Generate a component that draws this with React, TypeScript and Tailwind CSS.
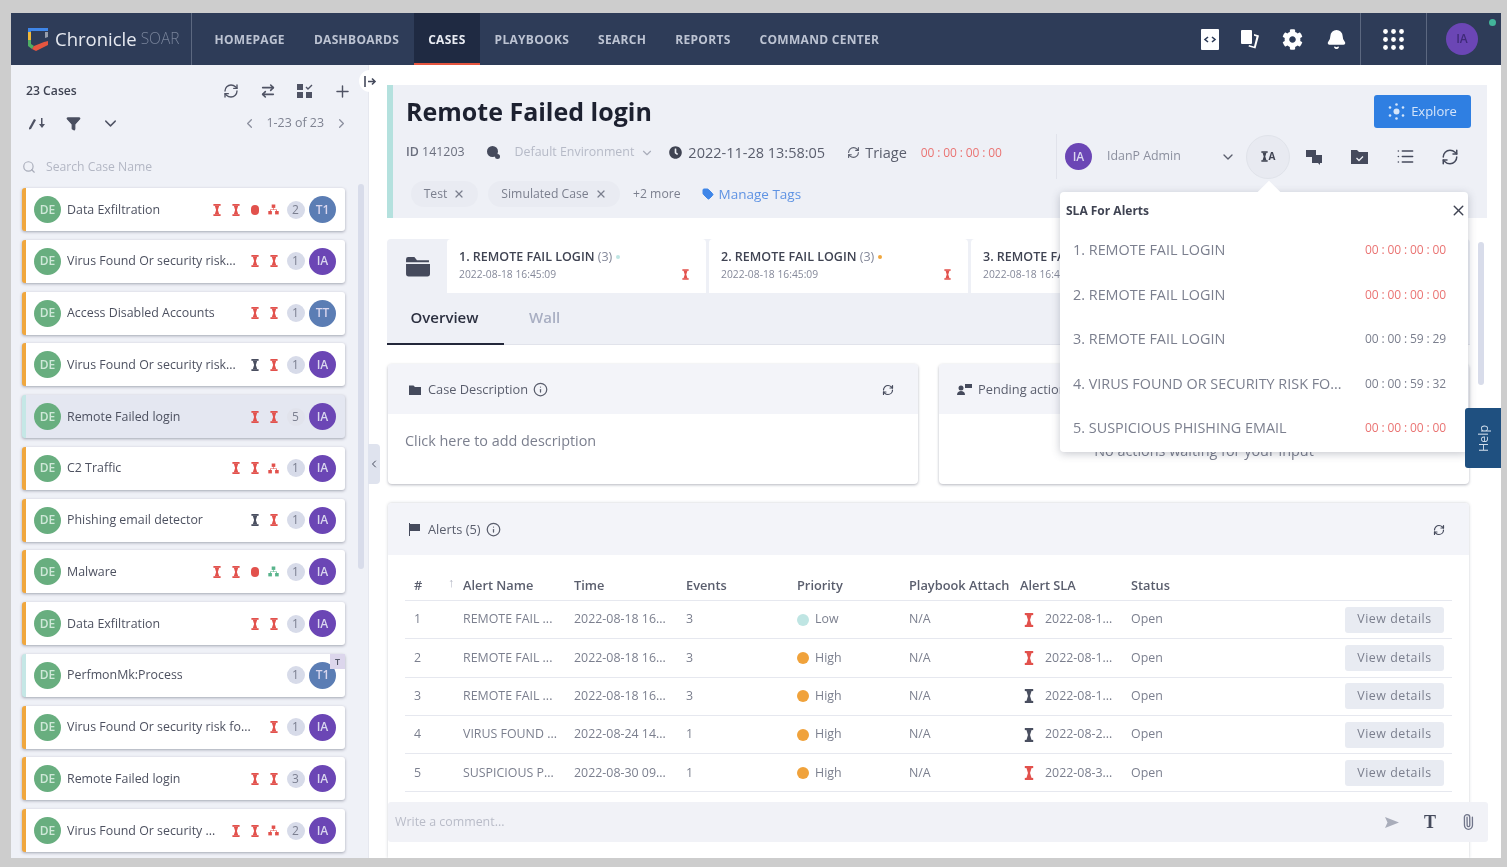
import {
  Bell,
  ChevronDown,
  ChevronLeft,
  ChevronRight,
  Funnel,
  Info,
  List,
  Paperclip,
  Plus,
  RefreshCw,
  Search,
  Tag,
  X,
  ArrowRightLeft,
} from "lucide-react";
import { FaClock, FaCog } from "react-icons/fa";

const navItems = ["Homepage", "Dashboards", "Cases", "Playbooks", "Search", "Reports", "Command Center"];

type Mark = "r" | "k" | "o" | "n" | "g";

const cases: { name: string; marks: Mark[]; count: number; owner: string; selected?: boolean; teal?: boolean; badge?: boolean }[] = [
  { name: "Data Exfiltration", marks: ["r", "r", "o", "n"], count: 2, owner: "T1" },
  { name: "Virus Found Or security risk...", marks: ["r", "r"], count: 1, owner: "IA" },
  { name: "Access Disabled Accounts", marks: ["r", "r"], count: 1, owner: "TT" },
  { name: "Virus Found Or security risk...", marks: ["k", "r"], count: 1, owner: "IA" },
  { name: "Remote Failed login", marks: ["r", "r"], count: 5, owner: "IA", selected: true, teal: true },
  { name: "C2 Traffic", marks: ["r", "r", "n"], count: 1, owner: "IA" },
  { name: "Phishing email detector", marks: ["k", "r"], count: 1, owner: "IA" },
  { name: "Malware", marks: ["r", "r", "o", "g"], count: 1, owner: "IA" },
  { name: "Data Exfiltration", marks: ["r", "r"], count: 1, owner: "IA" },
  { name: "PerfmonMk:Process", marks: [], count: 1, owner: "T1", teal: true, badge: true },
  { name: "Virus Found Or security risk fo...", marks: ["r"], count: 1, owner: "IA" },
  { name: "Remote Failed login", marks: ["r", "r"], count: 3, owner: "IA" },
  { name: "Virus Found Or security ...", marks: ["r", "r", "n"], count: 2, owner: "IA" },
];

const alerts = [
  { name: "REMOTE FAIL ...", time: "2022-08-18 16...", events: 3, priority: "Low", sla: "2022-08-1...", late: true },
  { name: "REMOTE FAIL ...", time: "2022-08-18 16...", events: 3, priority: "High", sla: "2022-08-1...", late: true },
  { name: "REMOTE FAIL ...", time: "2022-08-18 16...", events: 3, priority: "High", sla: "2022-08-1...", late: false },
  { name: "VIRUS FOUND ...", time: "2022-08-24 14...", events: 1, priority: "High", sla: "2022-08-2...", late: false },
  { name: "SUSPICIOUS P...", time: "2022-08-30 09...", events: 1, priority: "High", sla: "2022-08-3...", late: true },
];

const slaRows = [
  { name: "1. REMOTE FAIL LOGIN", time: "00 : 00 : 00 : 00", late: true },
  { name: "2. REMOTE FAIL LOGIN", time: "00 : 00 : 00 : 00", late: true },
  { name: "3. REMOTE FAIL LOGIN", time: "00 : 00 : 59 : 29", late: false },
  { name: "4. VIRUS FOUND OR SECURITY RISK FO...", time: "00 : 00 : 59 : 32", late: false },
  { name: "5. SUSPICIOUS PHISHING EMAIL", time: "00 : 00 : 00 : 00", late: true },
];

function Hourglass({ color = "#e2514c", w = 8, h = 12 }: { color?: string; w?: number; h?: number }) {
  return (
    <svg width={w} height={h} viewBox="0 0 8 12" fill={color} className="shrink-0">
      <rect x="0.4" y="0" width="7.2" height="1.8" />
      <rect x="0.4" y="10.2" width="7.2" height="1.8" />
      <path d="M1.8 1.8h4.4L4.9 6l1.3 4.2H1.8L3.1 6z" />
    </svg>
  );
}

function NetworkMark({ color = "#e2514c" }: { color?: string }) {
  return (
    <svg width="11" height="11" viewBox="0 0 11 11" fill={color} className="shrink-0">
      <rect x="3.7" y="0.5" width="3.6" height="3.4" />
      <rect x="0.3" y="7" width="3.6" height="3.4" />
      <rect x="7.1" y="7" width="3.6" height="3.4" />
      <path d="M5.2 3.5h.6v2h3.2V7h-.7V6.1H2.7V7H2V5.5h3.2z" />
    </svg>
  );
}

function CaseMark({ mark }: { mark: Mark }) {
  if (mark === "r") return <Hourglass />;
  if (mark === "k") return <Hourglass color="#4a4f60" />;
  if (mark === "o") return <span className="w-[10px] h-[10px] rounded-full bg-[#e2514c]" />;
  if (mark === "g") return <NetworkMark color="#59b48c" />;
  return <NetworkMark />;
}

function Logo() {
  return (
    <svg width="22" height="25" viewBox="0 0 22 25" className="shrink-0">
      <path d="M1 1h20v3H4v1H1z" fill="#3f86e8" />
      <path d="M1 5h3v8H1z" fill="#f0b93a" />
      <path d="M1 13h3v4l3 2-2 3-4-3z" fill="#4fae63" />
      <path d="M7 19l10-4 4-1v4L9 24l-4-2z" fill="#e5553f" />
      <path d="M18 5h3v5l-3 1z" fill="#ffffff" opacity="0.5" />
    </svg>
  );
}

function Avatar({ text, size = 27 }: { text: string; size?: number }) {
  const bg = text === "IA" ? "bg-[#6b46b5]" : "bg-[#5b7db4]";
  return (
    <span
      className={`shrink-0 rounded-full flex items-center justify-center text-[12px] font-semibold text-[#d9d6ee] ${bg}`}
      style={{ width: size, height: size }}
    >
      {text}
    </span>
  );
}

function FolderIcon({ className }: { className?: string }) {
  return (
    <svg viewBox="0 0 24 20" className={className} fill="currentColor">
      <path d="M1 3a2 2 0 0 1 2-2h6l2.5 3H23v2H1z" />
      <path d="M1 7.5h23V17a2.5 2.5 0 0 1-2.5 2.5h-18A2.5 2.5 0 0 1 1 17z" />
    </svg>
  );
}

function SmallFolder() {
  return (
    <svg width="14" height="12" viewBox="0 0 14 12" fill="#454a5c">
      <path d="M1 1.5h4.5L7 3h6v8H1z" />
    </svg>
  );
}

function Sidebar() {
  return (
    <aside className="relative w-[358px] shrink-0 bg-[#eff1f7] flex flex-col overflow-hidden border-r border-[#e6e8ef]">
      <div className="flex items-center h-[50px] pl-[15px] pt-[2px]">
        <span className="text-[12.2px] font-semibold text-[#3f4352]">23 Cases</span>
        <div className="ml-auto flex items-center gap-[20.5px] pr-[16.5px] text-[#4f5364]">
          <RefreshCw size={16} strokeWidth={2} />
          <ArrowRightLeft size={16} strokeWidth={2.4} />
          <svg width="18" height="16" viewBox="0 0 18 16" fill="#4f5364">
            <rect x="1" y="1" width="6" height="6" />
            <rect x="1" y="9" width="6" height="6" />
            <rect x="10" y="9" width="6" height="6" />
            <path d="M10 4l2 2 4-4" fill="none" stroke="#4f5364" strokeWidth="1.4" />
          </svg>
          <Plus size={19} strokeWidth={1.8} className="ml-[-2px]" />
        </div>
      </div>
      <div className="flex items-center h-[16px] pl-[17px]">
        <svg width="18" height="14" viewBox="0 0 18 14" fill="#4f5364">
          <path d="M1 12l5-9 2 1-5 9-2 .5z" />
          <path d="M13 2h1.5v6H17l-3 4-3-4h2z" />
        </svg>
        <Funnel size={15} fill="#4a4f60" className="ml-[20px] text-[#4a4f60]" />
        <ChevronDown size={19} strokeWidth={1.8} className="ml-[20px] text-[#4f5364]" />
        <div className="ml-auto flex items-center pr-[19px] text-[#8b8f9e]">
          <ChevronLeft size={15} />
          <span className="mx-[10px] text-[12.4px] text-[#7e8291]">1-23 of 23</span>
          <ChevronRight size={15} />
        </div>
      </div>
      <div className="flex items-center h-[56px] pl-[11px] pt-[16px] text-[#a9adba]">
        <Search size={14} />
        <span className="ml-[10px] text-[12.2px] text-[#b3b7c4]">Search Case Name</span>
      </div>
      <div className="relative flex-1 pl-[11px] pt-[1px]">
        <div className="w-[323px] flex flex-col gap-[8.75px]">
          {cases.map((c, i) => (
            <div
              key={i}
              className={`relative h-[43px] shrink-0 flex items-center pl-[8px] pr-[9px] rounded-[3px] border-l-4 shadow-[0_1px_3px_rgba(70,75,95,0.45)] ${
                c.teal ? "border-[#c5e7e6]" : "border-[#f0a73e]"
              } ${c.selected ? "bg-[#e4e7f1]" : "bg-white"}`}
            >
              <span className="shrink-0 w-[27px] h-[27px] rounded-full bg-[#68ae7f] flex items-center justify-center text-[12px] font-semibold text-[#cfe8d8]">
                DE
              </span>
              <span className="ml-[6px] pt-[1px] flex-1 min-w-0 truncate text-[12.4px] text-[#4d5160]">{c.name}</span>
              <div className="shrink-0 flex items-center gap-[10.7px] pr-[9px] pl-[2px]">
                {c.marks.map((m, j) => (
                  <span key={j} className="w-[8px] flex justify-center">
                    <CaseMark mark={m} />
                  </span>
                ))}
              </div>
              <span
                className={`shrink-0 w-[18px] h-[18px] rounded-full flex items-center justify-center text-[12px] text-[#7b7f90] mr-[4.5px] ${
                  c.selected ? "bg-[#e1e3ec]" : "bg-[#d7dbe9]"
                }`}
              >
                {c.count}
              </span>
              <Avatar text={c.owner} />
              {c.badge && (
                <span className="absolute right-0 top-0 w-[15px] h-[15px] bg-[#dcd6ec] flex items-center justify-center text-[9px] font-semibold text-[#55596a]">
                  T
                </span>
              )}
            </div>
          ))}
        </div>
        <div className="absolute left-[347px] top-[-3px] w-[6px] h-[385px] rounded-full bg-[#d8dcea]" />
      </div>
    </aside>
  );
}

function TopBar() {
  return (
    <header className="h-[52px] shrink-0 bg-[#2e3c58] flex items-stretch">
      <div className="w-[181px] shrink-0 flex items-center pl-[16px] border-r border-[#5c6880]">
        <Logo />
        <span className="ml-[6px] text-[18.5px] text-[#e6e9f0]">Chronicle</span>
        <span className="ml-[4px] text-[15.5px] font-light text-[#78839a]">SOAR</span>
      </div>
      <nav className="flex items-stretch pl-[8px]">
        {navItems.map((n) => (
          <div
            key={n}
            className={`flex items-center pt-[3px] px-[14.5px] text-[12px] font-bold uppercase tracking-[0.3px] border-b-2 ${
              n === "Cases" ? "bg-[#1f2a42] border-[#e5553f] text-[#e8ebf2]" : "border-transparent text-[#bcc3d2]"
            }`}
          >
            {n}
          </div>
        ))}
      </nav>
      <div className="ml-auto flex items-stretch">
        <div className="flex items-center gap-[21px] pr-[13px] text-white">
          <svg width="18" height="21" viewBox="0 0 18 21">
            <rect width="18" height="21" rx="1" fill="#ffffff" />
            <path d="M7 8l-3 2.5L7 13M11 8l3 2.5L11 13" fill="none" stroke="#2e3c58" strokeWidth="1.6" />
          </svg>
          <svg width="21" height="21" viewBox="0 0 21 21" fill="#ffffff">
            <rect x="1" y="1" width="11" height="14" rx="1" />
            <path d="M14 5l5 1.5-3.5 13-7-2 .5-1.5 5 1.400 2.500-10-2.500-.6z" />
          </svg>
          <FaCog size={21} />
          <Bell size={21} fill="#ffffff" className="ml-[2px]" />
        </div>
        <div className="w-[67px] flex items-center justify-center border-x border-[#5c6880]">
          <svg width="21" height="21" viewBox="0 0 21 21" fill="#ffffff">
            {[2.5, 10.5, 18.5].map((y) =>
              [2.5, 10.5, 18.5].map((x) => <circle key={`${x}-${y}`} cx={x} cy={y} r="2.4" />),
            )}
          </svg>
        </div>
        <div className="relative w-[74px] flex items-center pl-[19px]">
          <span className="w-[32px] h-[32px] rounded-full bg-[#6b46b5] flex items-center justify-center text-[12px] font-semibold text-[#3f2a78]">
            IA
          </span>
          <span className="absolute right-[5px] top-[6px] w-[7px] h-[7px] rounded-full bg-[#43b59a]" />
        </div>
      </div>
    </header>
  );
}

function CaseHeader() {
  return (
    <section className="h-[133px] shrink-0 mr-[14px] bg-[#eef0f6] border-l-[6px] border-[#b4e1de] pl-[13px] pr-[16px] flex flex-col">
      <div className="flex items-start pt-[10px] h-[50px]">
        <h1 className="text-[25px] leading-[32px] font-bold text-[#1d2130]">Remote Failed login</h1>
        <button className="ml-auto w-[97px] h-[33px] rounded-[3px] bg-[#2f7fe2] flex items-center justify-center gap-[6px] text-[13px] text-[#d5e5fa]">
          <svg width="17" height="17" viewBox="0 0 17 17" fill="#d5e5fa">
            <circle cx="8.500" cy="8.500" r="3" />
            {[
              [8.5, 1.5],
              [8.5, 15.500],
              [2, 4.500],
              [15, 4.500],
              [2, 12.500],
              [15, 12.500],
            ].map(([x, y]) => (
              <circle key={`${x}-${y}`} cx={x} cy={y} r="1.3" />
            ))}
          </svg>
          Explore
        </button>
      </div>
      <div className="flex items-center h-[45px] mt-[-1px]">
        <div className="flex items-center pb-[8px] whitespace-nowrap">
          <span className="text-[12.4px] text-[#6b6f7e]">
            <span className="font-semibold">ID</span> 141203
          </span>
          <svg width="15" height="15" viewBox="0 0 15 15" fill="#454a5c" className="ml-[21px]">
            <circle cx="6.500" cy="6.500" r="5.500" />
            <circle cx="11.500" cy="11.500" r="2.500" />
          </svg>
          <span className="ml-[14px] text-[12.4px] text-[#b6bac7]">Default Environment</span>
          <ChevronDown size={14} className="ml-[6px] text-[#a9adba]" />
          <FaClock size={13} className="ml-[15px] text-[#3f4352]" />
          <span className="ml-[6px] text-[14.5px] text-[#5a5e6d]">2022-11-28 13:58:05</span>
          <RefreshCw size={13} className="ml-[22px] text-[#5a5e6d]" />
          <span className="ml-[5px] text-[14.5px] text-[#5a5e6d]">Triage</span>
          <span className="ml-[14px] text-[12px] tracking-[-0.12px] text-[#ea7473]">00 : 00 : 00 : 00</span>
        </div>
        <div className="ml-auto flex items-center h-[45px] pl-[8px] border-l border-[#e1e3eb] w-[415px]">
          <Avatar text="IA" />
          <span className="ml-[15px] w-[74px] text-[12.4px] whitespace-nowrap text-[#8b8f9e]">IdanP Admin</span>
          <ChevronDown size={16} className="ml-[39px] text-[#5a5e6d]" />
          <span className="ml-[10px] w-[44px] h-[44px] rounded-full bg-[#e8eaf1] border border-[#e0e3ea] flex items-center justify-center gap-[1px]">
            <Hourglass color="#3f4352" w={7} h={11} />
            <span className="text-[10px] font-bold text-[#3f4352]">A</span>
          </span>
          <svg width="18" height="16" viewBox="0 0 18 16" fill="#454a5c" className="ml-[15px]">
            <rect x="1" y="1" width="10" height="7" />
            <path d="M7 6h10v8h-2v2l-2-2H7z" />
          </svg>
          <svg width="19" height="16" viewBox="0 0 19 16" className="ml-[27px]">
            <path d="M1 1h6l2 2h9v12H1z" fill="#454a5c" />
            <path d="M6.500 9l2.500 2.500 4-4" fill="none" stroke="#eef0f6" strokeWidth="1.300" />
          </svg>
          <List size={19} className="ml-[27px] text-[#454a5c]" />
          <RefreshCw size={18} className="ml-[26px] text-[#454a5c]" />
        </div>
      </div>
      <div className="flex items-center h-[26px] mt-[2px] pl-[5px] text-[12.2px]">
        <span className="h-[26px] w-[67px] rounded-full bg-[#e9ebf2] flex items-center justify-center gap-[6px] text-[#7b7f8e]">
          Test <X size={12} strokeWidth={2.4} />
        </span>
        <span className="ml-[10px] h-[26px] w-[132px] rounded-full bg-[#e9ebf2] flex items-center justify-center gap-[6px] text-[#7b7f8e]">
          Simulated Case <X size={12} strokeWidth={2.4} />
        </span>
        <span className="ml-[13px] text-[#7b7f8e]">+2 more</span>
        <Tag size={12} fill="#3f86e8" className="ml-[21px] text-[#3f86e8]" />
        <span className="ml-[5px] text-[13.5px] text-[#5f93e3]">Manage Tags</span>
      </div>
    </section>
  );
}

function AlertTabs() {
  const tabs = [
    { title: "1. REMOTE FAIL LOGIN", dot: "bg-[#bfe5e3]" },
    { title: "2. REMOTE FAIL LOGIN", dot: "bg-[#f0a73e]" },
    { title: "3. REMOTE FAIL LOGIN", dot: "bg-[#f0a73e]" },
  ];
  return (
    <section className="mt-[21px] mr-[31px] h-[106px] shrink-0 bg-[#eef0f6] flex flex-col rounded-t-[4px]">
      <div className="h-[54px] flex">
        <div className="w-[60px] shrink-0 flex items-center justify-center text-[#454a5c]">
          <FolderIcon className="w-[25px] h-[21px]" />
        </div>
        <div className="w-[613px] flex gap-[3px] overflow-hidden">
          {tabs.map((t) => (
            <div key={t.title} className="w-[259px] shrink-0 bg-white relative pl-[12px] pt-[9px] rounded-t-[4px]">
              <div className="text-[12.5px] leading-[17px] font-semibold text-[#3f4352] whitespace-nowrap">
                {t.title} <span className="font-normal text-[#85899a]">(3)</span>
                <span className={`inline-block ml-[4px] mb-[2px] w-[4px] h-[4px] rounded-full ${t.dot}`} />
              </div>
              <div className="text-[10.3px] leading-[17px] mt-[1px] text-[#85899a] whitespace-nowrap">2022-08-18 16:45:09</div>
              <span className="absolute right-[17px] top-[30px]">
                <Hourglass w={7} h={11} />
              </span>
            </div>
          ))}
        </div>
      </div>
      <div className="flex-1 flex items-end border-b border-[#e1e3eb]">
        <div className="w-[117px] h-[50px] flex items-center justify-center pr-[2px] pb-[4px] border-b-2 border-[#23273a] mb-[-1px] text-[15px] font-semibold text-[#2c3040]">
          Overview
        </div>
        <div className="ml-[25px] h-[50px] pb-[4px] flex items-center text-[15px] font-semibold text-[#a8aec2]">Wall</div>
      </div>
    </section>
  );
}

function CardHead({ children, refresh = true, tall = false }: { children: React.ReactNode; refresh?: boolean; tall?: boolean }) {
  return (
    <div
      className={`${tall ? "h-[52px]" : "h-[50px]"} shrink-0 bg-[#f3f4f9] rounded-t-[4px] flex items-center pt-[1px] pl-[20px] pr-[24px] text-[12.8px] text-[#5a5e6d]`}
    >
      {children}
      {refresh && <RefreshCw size={12} strokeWidth={2.4} className="ml-auto text-[#454a5c]" />}
    </div>
  );
}

function DescriptionCards() {
  return (
    <section className="mt-[19px] ml-[1px] mr-[32px] h-[120px] shrink-0 flex gap-[21px]">
      <div className="flex-1 min-w-0 bg-white rounded-[4px] shadow-[0_1px_3px_rgba(70,75,95,0.4)] flex flex-col">
        <CardHead>
          <SmallFolder />
          <span className="ml-[6px]">Case Description</span>
          <Info size={15} className="ml-[5px]" />
        </CardHead>
        <div className="pl-[17px] pt-[16px] text-[14.4px] text-[#7b7f8e]">Click here to add description</div>
      </div>
      <div className="flex-1 min-w-0 bg-white rounded-[4px] shadow-[0_1px_3px_rgba(70,75,95,0.4)] flex flex-col">
        <CardHead refresh={false}>
          <svg width="16" height="13" viewBox="0 0 16 13" fill="#454a5c" className="ml-[-2px]">
            <rect x="8" y="1" width="7" height="4" />
            <circle cx="4" cy="5" r="2.500" />
            <path d="M0 12c0-3 2-4 4-4s4 1 4 4z" />
          </svg>
          <span className="ml-[5px] whitespace-nowrap">Pending actions</span>
        </CardHead>
        <div className="pt-[27px] text-center text-[14.4px] text-[#7b7f8e] leading-[20px]">No actions waiting for your input</div>
      </div>
    </section>
  );
}

function AlertsTable() {
  const cols = "grid grid-cols-[49px_111px_112px_111px_112px_111px_111px_1fr_auto] items-center pl-[9px] pr-[8px]";
  return (
    <section className="mt-[19px] ml-[1px] mr-[32px] flex-1 min-h-0 bg-white rounded-t-[4px] shadow-[0_0_3px_rgba(70,75,95,0.3)] flex flex-col">
      <CardHead tall>
        <svg width="13" height="13" viewBox="0 0 13 13" fill="#454a5c">
          <path d="M1 0h1v13H1zM2 1h10v7H2z" />
        </svg>
        <span className="ml-[7px]">Alerts (5)</span>
        <Info size={15} className="ml-[5px]" />
      </CardHead>
      <div className="ml-[17px] mr-[17px] pt-[16px]">
        <div className={`${cols} h-[30px] relative text-[12.8px] font-semibold text-[#5a5e6d] border-b border-[#e6e8ef] whitespace-nowrap`}>
          <span>#</span>
          <span className="relative">
            <span className="absolute left-[-15px] top-[-3px] text-[#b3b7c4] font-normal">↑</span>
            Alert Name
          </span>
          <span>Time</span>
          <span>Events</span>
          <span>Priority</span>
          <span>Playbook Attach</span>
          <span>Alert SLA</span>
          <span>Status</span>
          <span />
        </div>
        {alerts.map((a, i) => (
          <div key={i} className={`${cols} h-[38.300px] text-[12.4px] text-[#7b7f8e] border-b border-[#e6e8ef] whitespace-nowrap`}>
            <span>{i + 1}</span>
            <span>{a.name}</span>
            <span>{a.time}</span>
            <span>{a.events}</span>
            <span className="flex items-center gap-[6px]">
              <span className={`w-[12px] h-[12px] rounded-full ${a.priority === "Low" ? "bg-[#bfe5e3]" : "bg-[#f0a23b]"}`} />
              {a.priority}
            </span>
            <span>N/A</span>
            <span className="flex items-center gap-[11px] pl-[4px]">
              <Hourglass color={a.late ? "#e2514c" : "#4a4f60"} w={10} h={14} />
              {a.sla}
            </span>
            <span>Open</span>
            <span className="w-[99px] h-[26px] rounded-[3px] bg-[#e8ebf2] flex items-center justify-center tracking-[0.5px] text-[#7b7f8e]">
              View details
            </span>
          </div>
        ))}
      </div>
    </section>
  );
}

function CommentBar() {
  return (
    <div className="absolute left-[19px] right-[13px] bottom-[16px] h-[40px] bg-[#f1f2f7] rounded-[3px] flex items-center pl-[7px] pr-[12px] text-[12.4px] text-[#b9bcc8]">
      Write a comment...
      <div className="ml-auto flex items-center gap-[24px]">
        <svg width="16" height="13" viewBox="0 0 16 13" fill="#a9adba">
          <path d="M1 1l14 5.500L1 12l2.500-5.500z" />
        </svg>
        <span className="text-[18px] leading-none font-bold font-['Liberation_Serif',serif] text-[#454a5c]">T</span>
        <Paperclip size={16} className="rotate-[-45deg] text-[#70758a]" />
      </div>
    </div>
  );
}

function SlaPopover() {
  return (
    <div className="absolute left-[691px] top-[127px] w-[408px] h-[260px] bg-white rounded-[4px] shadow-[0_2px_8px_rgba(70,75,95,0.3)] pl-[13px] pr-[22px]">
      <span className="absolute left-[201px] top-[-8px] w-[16px] h-[16px] rotate-45 bg-white" />
      <div className="relative flex items-center h-[38px]">
        <span className="ml-[-7px] text-[12px] font-bold text-[#3f4352]">SLA For Alerts</span>
        <X size={17} strokeWidth={2} className="absolute right-[-21px] top-[10px] text-[#3f4352]" />
      </div>
      <div className="flex flex-col mt-[-2px]">
        {slaRows.map((r) => (
          <div key={r.name} className="h-[44.500px] flex items-center justify-between whitespace-nowrap">
            <span className="text-[14.4px] text-[#7b7f8e]">{r.name}</span>
            <span className={`text-[12px] tracking-[-0.12px] ${r.late ? "text-[#ea7473]" : "text-[#7b7f8e]"}`}>{r.time}</span>
          </div>
        ))}
      </div>
    </div>
  );
}

export default function App() {
  return (
    <div className="w-[1507px] h-[867px] overflow-hidden bg-[#cdcdcd] pt-[13px] pl-[11px] pr-[6px] pb-[9px] font-['Open_Sans',sans-serif]">
      <div className="h-full flex flex-col bg-white overflow-hidden blur-[0.5px]">
        <TopBar />
        <div className="flex-1 min-h-0 flex">
          <Sidebar />
          <main className="relative flex-1 min-w-0 bg-white pl-[18px] pt-[20px] flex flex-col">
            <CaseHeader />
            <AlertTabs />
            <DescriptionCards />
            <AlertsTable />
            <CommentBar />
            <div className="absolute right-[17px] top-[177px] w-[6px] h-[143px] rounded-full bg-[#d8dcea]" />
            <SlaPopover />
            <button className="absolute right-0 top-[343px] w-[36px] h-[60px] pl-[3px] rounded-l-[3px] bg-[#1f5080] flex items-center justify-center">
              <span className="-rotate-90 text-[12.5px] text-[#cfdcea]">Help</span>
            </button>
            <span className="absolute left-[-10px] top-[5px] w-[22px] h-[22px] rounded-full bg-white flex items-center justify-center text-[#454a5c]">
              <svg width="13" height="11" viewBox="0 0 13 11" fill="none" stroke="#454a5c" strokeWidth="1.600">
                <path d="M1 0v11M4 5.500h7M8 2.500l3 3-3 3" />
              </svg>
            </span>
            <span className="absolute left-[-1px] top-[379px] w-[12px] h-[40px] rounded-r-[4px] bg-[#dfe3ee] flex items-center justify-center text-[#454a5c]">
              <ChevronLeft size={16} />
            </span>
          </main>
        </div>
      </div>
    </div>
  );
}
